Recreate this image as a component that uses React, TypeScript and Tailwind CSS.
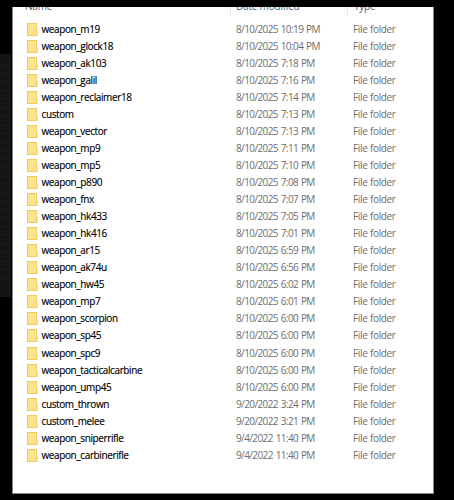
interface FolderEntry {
  name: string;
  modified: string;
}

const FOLDERS: FolderEntry[] = [
  { name: "weapon_m19", modified: "8/10/2025 10:19 PM" },
  { name: "weapon_glock18", modified: "8/10/2025 10:04 PM" },
  { name: "weapon_ak103", modified: "8/10/2025 7:18 PM" },
  { name: "weapon_galil", modified: "8/10/2025 7:16 PM" },
  { name: "weapon_reclaimer18", modified: "8/10/2025 7:14 PM" },
  { name: "custom", modified: "8/10/2025 7:13 PM" },
  { name: "weapon_vector", modified: "8/10/2025 7:13 PM" },
  { name: "weapon_mp9", modified: "8/10/2025 7:11 PM" },
  { name: "weapon_mp5", modified: "8/10/2025 7:10 PM" },
  { name: "weapon_p890", modified: "8/10/2025 7:08 PM" },
  { name: "weapon_fnx", modified: "8/10/2025 7:07 PM" },
  { name: "weapon_hk433", modified: "8/10/2025 7:05 PM" },
  { name: "weapon_hk416", modified: "8/10/2025 7:01 PM" },
  { name: "weapon_ar15", modified: "8/10/2025 6:59 PM" },
  { name: "weapon_ak74u", modified: "8/10/2025 6:56 PM" },
  { name: "weapon_hw45", modified: "8/10/2025 6:02 PM" },
  { name: "weapon_mp7", modified: "8/10/2025 6:01 PM" },
  { name: "weapon_scorpion", modified: "8/10/2025 6:00 PM" },
  { name: "weapon_sp45", modified: "8/10/2025 6:00 PM" },
  { name: "weapon_spc9", modified: "8/10/2025 6:00 PM" },
  { name: "weapon_tacticalcarbine", modified: "8/10/2025 6:00 PM" },
  { name: "weapon_ump45", modified: "8/10/2025 6:00 PM" },
  { name: "custom_thrown", modified: "9/20/2022 3:24 PM" },
  { name: "custom_melee", modified: "9/20/2022 3:21 PM" },
  { name: "weapon_sniperrifle", modified: "9/4/2022 11:40 PM" },
  { name: "weapon_carbinerifle", modified: "9/4/2022 11:40 PM" },
];

function FolderIcon() {
  return (
    <svg width="11" height="13" viewBox="0 0 11 13" className="shrink-0" aria-hidden="true">
      <path d="M0 0H10V7L10.6 7.6V13H0Z" fill="#f1cb5c" />
      <path d="M1 1H9.2V12H1Z" fill="#fde38e" />
      <path d="M8.6 7.4H9.8V12.2H8.6Z" fill="#f8d670" />
    </svg>
  );
}

// Sliver of the window behind, visible at the left edge
function BackgroundWindow() {
  return (
    <div className="mt-[54px] flex h-[243px] w-[11px] shrink-0 flex-col gap-[6.5px] bg-[#141414] pt-[10px]">
      {Array.from({ length: 26 }, (_, i) => (
        <div key={i} className="h-[2px] w-[10px] shrink-0 bg-[#181818]" />
      ))}
    </div>
  );
}

// The header row is scrolled mostly out of view, only its lower edge shows
function ColumnHeader() {
  return (
    <div className="flex h-[8px] shrink-0 items-end overflow-hidden text-[10px] leading-[14px] tracking-[-0.2px] text-[#4c607a]">
      <span className="mb-[2px] w-[217px] pl-[12px]">Name</span>
      <span className="h-[8px] w-px bg-[#e5e5e5]" />
      <span className="mb-[2px] w-[116px] pl-[5px]">Date modified</span>
      <span className="h-[8px] w-px bg-[#e5e5e5]" />
      <span className="mb-[2px] pl-[6px]">Type</span>
    </div>
  );
}

function FolderRow({ name, modified }: FolderEntry) {
  return (
    <div className="flex h-[17.04px] shrink-0 items-center whitespace-nowrap text-[10px] leading-[17px]">
      <div className="flex w-[209px] items-center gap-[3.5px] tracking-[-0.39px] text-black [-webkit-text-stroke:0.15px_#000]">
        <FolderIcon />
        <span>{name}</span>
      </div>
      <span className="w-[117px] tracking-[-0.6px] text-[#6d6d6d] [word-spacing:0.8px]">{modified}</span>
      <span className="tracking-[-0.35px] text-[#6d6d6d] [word-spacing:0.3px]">File folder</span>
    </div>
  );
}

export default function App() {
  return (
    <div className="flex h-[500px] w-[454px] overflow-hidden bg-black font-['Open_Sans','Noto_Sans',sans-serif]">
      <BackgroundWindow />
      <main className="mt-[7px] ml-px flex h-[487px] w-[422px] flex-col overflow-hidden border-x border-b border-[#858585] bg-white">
        <ColumnHeader />
        <div className="flex flex-col pt-[5.9px] pl-[14px]">
          {FOLDERS.map((folder) => (
            <FolderRow key={folder.name} {...folder} />
          ))}
        </div>
      </main>
    </div>
  );
}
